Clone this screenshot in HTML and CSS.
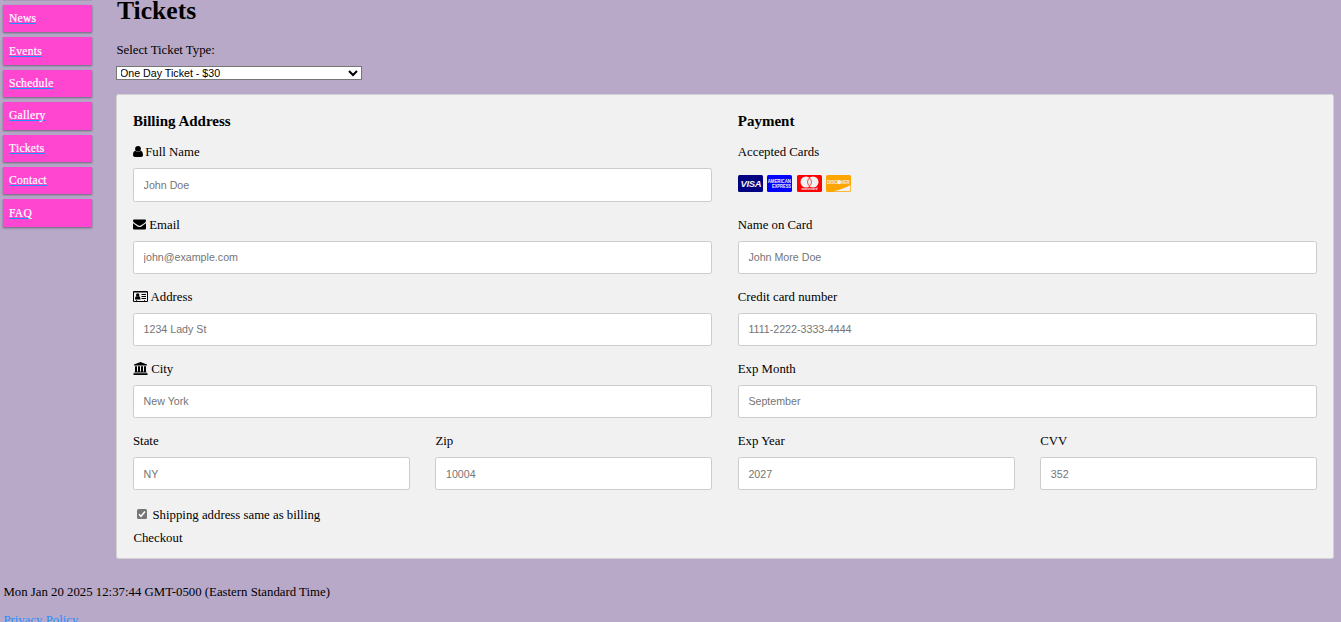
FILE: index.html
```html
<!DOCTYPE html>
<html lang="en">
<head>
  <meta charset="UTF-8">
  <meta name="viewport" content="width=device-width, initial-scale=1.0">
  <title>Tickets</title>
  <link rel="stylesheet" href="styles.css">
</head>
<body>
  <div class="page">
    <nav class="menu">
      <ul>
        <li><a href="#">News</a></li>
        <li><a href="#">Events</a></li>
        <li><a href="#">Schedule</a></li>
        <li><a href="#">Gallery</a></li>
        <li><a href="#">Tickets</a></li>
        <li><a href="#">Contact</a></li>
        <li><a href="#">FAQ</a></li>
      </ul>
    </nav>

    <main class="content">
      <h1>Tickets</h1>
      <label class="type-label" for="ticket">Select Ticket Type:</label>
      <div class="select-box">
        <select id="ticket" name="ticket">
          <option>One Day Ticket - $30</option>
          <option>Two Day Ticket - $50</option>
        </select>
      </div>

      <form class="container">
        <div class="row">
          <div class="col">
            <h3>Billing Address</h3>
            <label for="fname"><svg class="icon user" width="10" height="13" viewBox="0 0 10 13"><circle cx="5" cy="3.800" r="2.900"/><path d="M2.300 5.800Q5 8.400 7.700 5.800Q10 6.200 10 10Q10 12 8 12H2Q0 12 0 10Q0 6.200 2.300 5.800z"/></svg> Full Name</label>
            <input type="text" id="fname" placeholder="John Doe">
            <label for="email"><svg class="icon" width="13" height="13" viewBox="0 0 13 13"><path d="M1 1.500h11q1 0 1 1Q13 4 11.500 5L8 7.300q-1.500 1-3 0L1.500 5Q0 4 0 2.500q0-1 1-1zM0 5.200l4.500 3.200q2 1.200 4 0L13 5.200V10.500q0 1-1 1H1q-1 0-1-1z"/></svg> Email</label>
            <input type="text" id="email" placeholder="john@example.com">
            <label for="adr"><svg class="icon" width="15" height="13" viewBox="0 0 15 13"><path fill-rule="evenodd" d="M1 1h13q1 0 1 1v9q0 1-1 1H1q-1 0-1-1V2q0-1 1-1zM1 2.500v8.500h2v-.700h1v.700h7v-.700h1v.700h2V2.500z"/><circle cx="4.700" cy="4.900" r="1.700"/><path d="M2 9.400q0-3.200 1.500-3.200h2.400q1.500 0 1.500 3.200zM8.500 4h4.500v1H8.500zM8.500 6h4.500v1H8.500zM8.500 8h4.500v1H8.500z"/></svg> Address</label>
            <input type="text" id="adr" placeholder="1234 Lady St">
            <label for="city"><svg class="icon" width="15" height="13" viewBox="0 0 15 13"><path d="M7.500 0L14 2.600v1H1v-1zM2 4.300h2V9.500h1V4.300h2V9.500h1V4.300h2V9.500h1V4.300h2V9.500l.600.400v.700H1.400v-.700L2 9.500zM.500 11.200h14V13H.500z"/></svg> City</label>
            <input type="text" id="city" placeholder="New York">
            <div class="row">
              <div class="col">
                <label for="state">State</label>
                <input type="text" id="state" placeholder="NY">
              </div>
              <div class="col">
                <label for="zip">Zip</label>
                <input type="text" id="zip" placeholder="10004">
              </div>
            </div>
          </div>

          <div class="col">
            <h3>Payment</h3>
            <label>Accepted Cards</label>
            <div class="cards">
              <svg width="25" height="17" viewBox="0 0 25 17">
                <rect width="25" height="17" rx="1.500" fill="navy"/>
                <text class="visa" x="2.500" y="12" textLength="21">VISA</text>
              </svg>
              <svg width="25" height="17" viewBox="0 0 25 17">
                <rect width="25" height="17" rx="1.500" fill="blue"/>
                <text class="amex" x="0.700" y="7.800" textLength="23.300" lengthAdjust="spacingAndGlyphs">AMERICAN</text>
                <text class="amex" x="5" y="12.800" textLength="19" lengthAdjust="spacingAndGlyphs">EXPRESS</text>
              </svg>
              <svg width="25" height="17" viewBox="0 0 25 17">
                <rect width="25" height="17" rx="1.500" fill="red"/>
                <circle cx="9" cy="7" r="5.500" fill="#f1f1f1"/>
                <circle cx="16" cy="7" r="5.500" fill="#f1f1f1"/>
                <path d="M12.500 2.800q-4 4.200 0 8.400q4-4.200 0-8.400z" fill="#f1f1f1" stroke="red" stroke-width=".7"/>
                <text class="tiny" x="4.500" y="15.400" textLength="16">mastercard</text>
              </svg>
              <svg width="25" height="17" viewBox="0 0 25 17">
                <rect width="25" height="17" rx="1.500" fill="orange"/>
                <path d="M24.300 10v6.300H7Q17 14.500 24.300 10z" fill="#f1f1f1"/>
                <text class="disc" x="1" y="8.900" textLength="22.500" lengthAdjust="spacingAndGlyphs">DISCOVER</text>
                <circle cx="13" cy="7.200" r="2" fill="#f1f1f1"/>
              </svg>
            </div>
            <label for="cname">Name on Card</label>
            <input type="text" id="cname" placeholder="John More Doe">
            <label for="ccnum">Credit card number</label>
            <input type="text" id="ccnum" placeholder="1111-2222-3333-4444">
            <label for="expmonth">Exp Month</label>
            <input type="text" id="expmonth" placeholder="September">
            <div class="row">
              <div class="col">
                <label for="expyear">Exp Year</label>
                <input type="text" id="expyear" placeholder="2027">
              </div>
              <div class="col">
                <label for="cvv">CVV</label>
                <input type="text" id="cvv" placeholder="352">
              </div>
            </div>
          </div>
        </div>
        <label class="same">
          <span class="check"><svg width="10" height="10" viewBox="0 0 10 10"><rect width="10" height="10" rx="1.500" fill="#767676"/><path d="M2 5.300l2 2L8 2.500" fill="none" stroke="#fff" stroke-width="1.500"/></svg></span>
          Shipping address same as billing
        </label>
        <div class="checkout">Checkout</div>
      </form>
    </main>
  </div>

  <footer>
    <p>Mon Jan 20 2025 12:37:44 GMT-0500 (Eastern Standard Time)</p>
    <a href="#">Privacy Policy</a>
  </footer>
</body>
</html>
```

FILE: styles.css
```css
* {
  box-sizing: border-box;
}
body {
  margin: 0;
  height: 622px;
  overflow: hidden;
  background-color: #b8a9c9;
  color: black;
  font-family: "Liberation Serif", "Times New Roman", serif;
  font-size: 12.8px;
  line-height: 15px;
}
.page {
  display: flex;
  height: 559px;
}
.menu {
  width: 116px;
  padding: 5px 24px 0 3px;
  /* bottom edge of the item above */
  background: linear-gradient(#9f90ae, #b8a9c9) 3px 0 / 89px 1.5px no-repeat;
}
.menu ul {
  margin: 0;
  padding: 0;
  list-style: none;
}
.menu li {
  height: 27.4px;
  margin-bottom: 5px;
  padding: 8.2px 6px 0;
  background-color: #ff46d1;
  font-size: 11.5px;
  box-shadow: 0 1px 2.4px rgba(0, 0, 0, 0.2), 0 1px 1.6px rgba(0, 0, 0, 0.24);
}
.menu a {
  display: inline-block;
  vertical-align: top;
  border-bottom: 1px solid dodgerblue;
  color: white;
  letter-spacing: 0.3px;
  line-height: 10px;
  text-decoration: none;
  -webkit-text-stroke: 0.2px white;
}
.content {
  width: 1218px;
}
h1 {
  margin: -4px 0 18px 1px;
  font-size: 25.6px;
  line-height: 29px;
}
.type-label {
  display: block;
  margin-bottom: 8px;
  padding-left: 0.4px;
}
.select-box {
  width: 246px;
  height: 14px;
  overflow: hidden;
  border: 1px solid #767676;
  background-color: white;
}
select {
  display: block;
  width: 100%;
  height: 16px;
  margin-top: -2px;
  padding: 0;
  border: 0;
  border-radius: 0;
  background-color: white;
  font-family: "Liberation Sans", Arial, sans-serif;
  font-size: 10.67px;
  text-indent: -1px;
}
.container {
  height: 465px;
  margin-top: 14px;
  padding: 4px 16px 12px;
  background-color: #f1f1f1;
  border: 1px solid lightgrey;
  border-radius: 2.4px;
}
.row {
  display: flex;
  gap: 25.6px;
}
.col {
  flex: 1;
  min-width: 0;
}
h3 {
  margin: 13.5px 0 15px;
  font-size: 15px;
  line-height: 17px;
}
.col label {
  display: block;
  height: 15px;
  margin-bottom: 8px;
  white-space: nowrap;
}
.icon {
  vertical-align: -2px;
}
.user {
  margin-right: -1px;
}
input {
  display: block;
  width: 100%;
  height: 33.2px;
  margin-bottom: 16px;
  padding: 9.6px;
  border: 1px solid #ccc;
  border-radius: 2.4px;
  font-family: "Liberation Sans", Arial, sans-serif;
  font-size: 10.67px;
}
#fname {
  height: 34px;
}
.cards {
  display: flex;
  gap: 4.5px;
  height: 50px;
  padding-top: 7.5px;
}
.cards text {
  fill: #f1f1f1;
  font-family: "Liberation Sans", Arial, sans-serif;
  font-weight: bold;
}
.cards .visa {
  font-size: 9.5px;
  font-style: italic;
}
.cards .amex {
  font-size: 5px;
}
.cards .tiny {
  font-size: 3px;
}
.cards .disc {
  font-size: 4.6px;
}
.same {
  display: flex;
  margin-top: 2px;
}
.check {
  width: 19.5px;
  padding-left: 4px;
}
.checkout {
  margin-top: 8px;
  padding-left: 0.4px;
}
footer {
  padding: 25.5px 3.4px 0;
}
footer p {
  margin: 0 0 13px;
}
footer a {
  color: dodgerblue;
}
```
